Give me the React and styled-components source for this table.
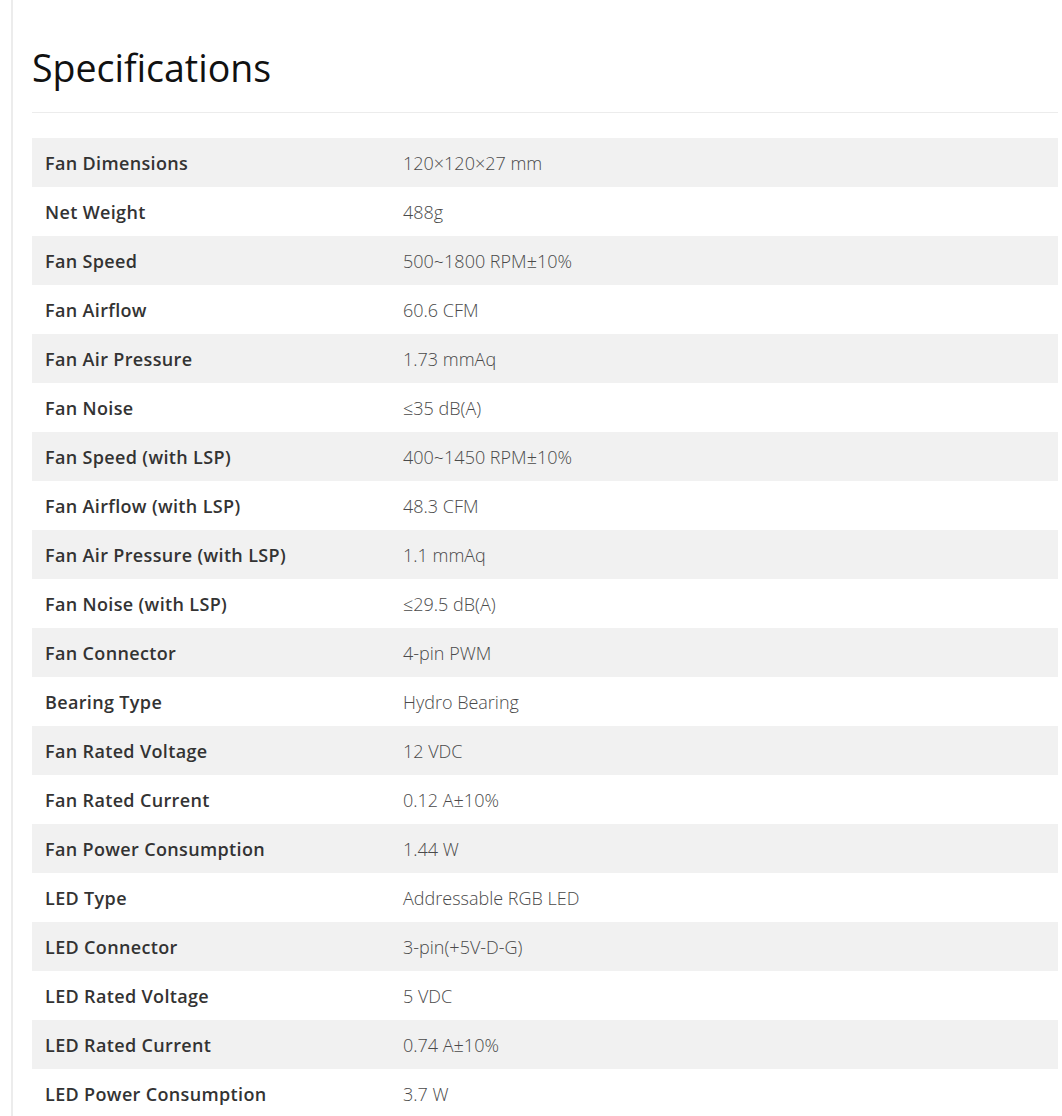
import React from "react";
import styled, { createGlobalStyle } from "styled-components";

const GlobalStyle = createGlobalStyle`
  body {
    margin: 0;
    background: #fff;
    font-family: "Open Sans", "Noto Sans", sans-serif;
  }
`;

const Wrapper = styled.div`
  margin-left: 11px;
  border-left: 2px solid #ececec;
  padding: 0 4px 0 19px;
  min-height: 1116px;
`;

const Title = styled.h2`
  margin: 0;
  padding: 45px 0 22px;
  font-size: 37.5px;
  line-height: 45px;
  font-weight: 400;
  color: #111;
  border-bottom: 1px solid #ececec;
`;

const Table = styled.table`
  width: 100%;
  margin-top: 25px;
  border-collapse: collapse;
  table-layout: fixed;
`;

const Row = styled.tr`
  height: 49px;
  background: ${({ $shaded }) => ($shaded ? "#f1f1f1" : "#fff")};
`;

const Label = styled.td`
  width: 332px;
  padding: 0 13px;
  font-size: 18px;
  font-weight: 600;
  letter-spacing: 0.35px;
  color: #333;
  white-space: nowrap;
`;

const Value = styled.td`
  padding: 0 13px;
  font-size: 18px;
  font-weight: 300;
  color: #4a4a4a;
`;

const specs = [
  ["Fan Dimensions", "120×120×27 mm"],
  ["Net Weight", "488g"],
  ["Fan Speed", "500~1800 RPM±10%"],
  ["Fan Airflow", "60.6 CFM"],
  ["Fan Air Pressure", "1.73 mmAq"],
  ["Fan Noise", "≤35 dB(A)"],
  ["Fan Speed (with LSP)", "400~1450 RPM±10%"],
  ["Fan Airflow (with LSP)", "48.3 CFM"],
  ["Fan Air Pressure (with LSP)", "1.1 mmAq"],
  ["Fan Noise (with LSP)", "≤29.5 dB(A)"],
  ["Fan Connector", "4-pin PWM"],
  ["Bearing Type", "Hydro Bearing"],
  ["Fan Rated Voltage", "12 VDC"],
  ["Fan Rated Current", "0.12 A±10%"],
  ["Fan Power Consumption", "1.44 W"],
  ["LED Type", "Addressable RGB LED"],
  ["LED Connector", "3-pin(+5V-D-G)"],
  ["LED Rated Voltage", "5 VDC"],
  ["LED Rated Current", "0.74 A±10%"],
  ["LED Power Consumption", "3.7 W"],
];

const App = () => (
  <>
    <GlobalStyle />
    <Wrapper>
      <Title>Specifications</Title>
      <Table>
        <tbody>
          {specs.map(([label, value], idx) => (
            <Row key={label} $shaded={idx % 2 === 0}>
              <Label>{label}</Label>
              <Value>{value}</Value>
            </Row>
          ))}
        </tbody>
      </Table>
    </Wrapper>
  </>
);

export default App;
